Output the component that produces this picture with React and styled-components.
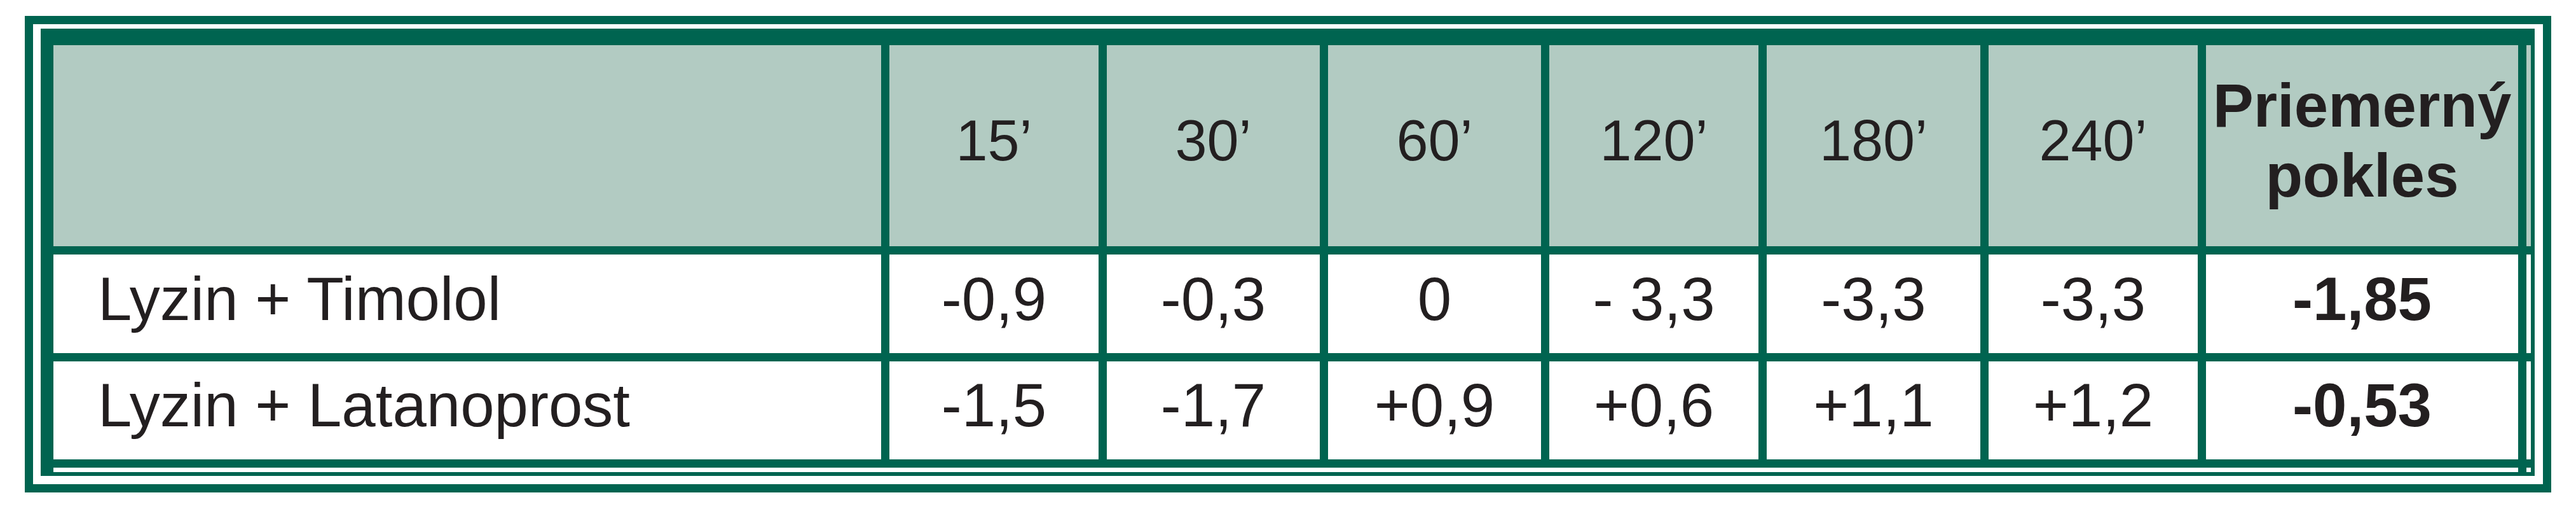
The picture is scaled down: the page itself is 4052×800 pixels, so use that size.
import React from 'react';
import styled, { createGlobalStyle } from 'styled-components';

const dark = '#006450';
const light = '#b2cbc2';

const GlobalStyle = createGlobalStyle`
  html, body {
    margin: 0;
    background: #fff;
  }
  body {
    font-family: "Liberation Sans", Arial, sans-serif;
    color: #231f20;
  }
`;

const Page = styled.div`
  padding: 25px 0 0 39px;
`;

const Frame = styled.div`
  width: 3974px;
  box-sizing: border-box;
  border: 13px solid ${dark};
  padding: 7px 13px 13px 12px;
`;

const Table = styled.div`
  display: grid;
  grid-template-columns: 1302px 329px 335px 335px 329px 336px 329px 491px 7px;
  grid-template-rows: 316px 155px 154px 7px;
  gap: 13px;
  padding: 26px 6px 6px 20px;
  background: ${dark};
`;

const Cell = styled.div`
  display: flex;
  align-items: center;
  justify-content: ${({ $left }) => ($left ? 'flex-start' : 'center')};
  padding: 0 0 16px ${({ $left }) => ($left ? '70px' : '0')};
  background: ${({ $head }) => ($head ? light : '#fff')};
  font-size: ${({ $small }) => ($small ? '90px' : '96px')};
  font-weight: ${({ $bold }) => ($bold ? 700 : 400)};
  line-height: 110px;
  text-align: center;
  white-space: nowrap;
`;

const Edge = styled.div`
  background: ${({ $head }) => ($head ? light : '#fff')};
`;

const BottomGap = styled.div`
  grid-column: 1 / 9;
  background: #fff;
`;

const times = ['15’', '30’', '60’', '120’', '180’', '240’'];

const rows = [
  { name: 'Lyzin + Timolol', values: ['-0,9', '-0,3', '0', '- 3,3', '-3,3', '-3,3'], avg: '-1,85' },
  { name: 'Lyzin + Latanoprost', values: ['-1,5', '-1,7', '+0,9', '+0,6', '+1,1', '+1,2'], avg: '-0,53' },
];

const App = () => (
  <Page>
    <GlobalStyle />
    <Frame>
      <Table>
        <Cell $head />
        {times.map((t) => (
          <Cell $head $small key={t}>{t}</Cell>
        ))}
        <Cell $head $bold>
          Priemerný
          <br />
          pokles
        </Cell>
        <Edge $head />

        {rows.map((r) => (
          <React.Fragment key={r.name}>
            <Cell $left>{r.name}</Cell>
            {r.values.map((v, i) => (
              <Cell key={i}>{v}</Cell>
            ))}
            <Cell $bold>{r.avg}</Cell>
            <Edge />
          </React.Fragment>
        ))}

        <BottomGap />
        <Edge />
      </Table>
    </Frame>
  </Page>
);

export default App;
